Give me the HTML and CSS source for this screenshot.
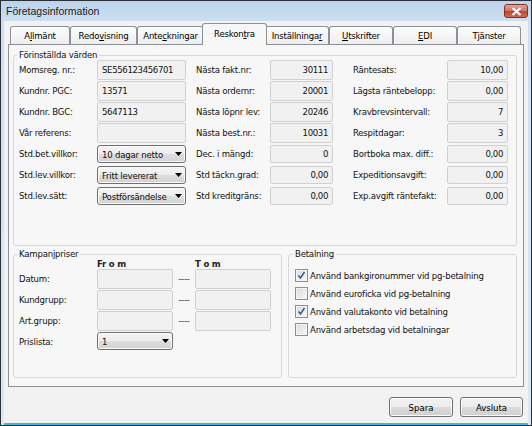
FILE: index.html
```html
<!DOCTYPE html>
<html>

<head>
    <meta charset="utf-8">
    <link rel="stylesheet" href="styles.css">
</head>

<body>
    <div class="window">
        <div class="titlebar">
            <span class="title">Företagsinformation</span>
            <span class="close">
                <svg width="11" height="9" viewBox="0 0 11 9">
                    <path d="M1.5 1 L9.5 8 M9.5 1 L1.5 8" stroke="#fff" stroke-width="2.2" fill="none" />
                </svg>
            </span>
        </div>

        <div class="client">
            <!-- tab strip -->
            <div class="tabs">
                <div class="tab t-allm">A<u>l</u>lmänt</div>
                <div class="tab t-redo">Redo<u>v</u>isning</div>
                <div class="tab t-ante">Ante<u>c</u>kningar</div>
                <div class="tab active">Reskon<u>t</u>ra</div>
                <div class="tab">Inställninga<u>r</u></div>
                <div class="tab"><u>U</u>tskrifter</div>
                <div class="tab"><u>E</u>DI</div>
                <div class="tab">T<u>j</u>änster</div>
            </div>

            <div class="panel">
                <fieldset class="group preset">
                    <legend>Förinställda värden</legend>
                    <div class="cols">
                        <div class="col col1">
                            <span class="lbl">Momsreg. nr.:</span>
                            <div class="field">SE556123456701</div>
                            <span class="lbl">Kundnr. PGC:</span>
                            <div class="field">13571</div>
                            <span class="lbl">Kundnr. BGC:</span>
                            <div class="field">5647113</div>
                            <span class="lbl">Vår referens:</span>
                            <div class="field"></div>
                            <span class="lbl">Std.bet.villkor:</span>
                            <div class="select"><span>10 dagar netto</span><svg width="7" height="4" viewBox="0 0 7 4"><path d="M0 0 H7 L3.5 4 Z" fill="#000" /></svg></div>
                            <span class="lbl">Std.lev.villkor:</span>
                            <div class="select"><span>Fritt levererat</span><svg width="7" height="4" viewBox="0 0 7 4"><path d="M0 0 H7 L3.5 4 Z" fill="#000" /></svg></div>
                            <span class="lbl">Std.lev.sätt:</span>
                            <div class="select"><span>Postförsändelse</span><svg width="7" height="4" viewBox="0 0 7 4"><path d="M0 0 H7 L3.5 4 Z" fill="#000" /></svg></div>
                        </div>

                        <div class="col col2">
                            <span class="lbl">Nästa fakt.nr:</span>
                            <div class="field num">30111</div>
                            <span class="lbl">Nästa ordernr:</span>
                            <div class="field num">20001</div>
                            <span class="lbl">Nästa löpnr lev:</span>
                            <div class="field num">20246</div>
                            <span class="lbl">Nästa best.nr.:</span>
                            <div class="field num">10031</div>
                            <span class="lbl">Dec. i mängd:</span>
                            <div class="field num short">0</div>
                            <span class="lbl">Std täckn.grad:</span>
                            <div class="field num short">0,00</div>
                            <span class="lbl">Std kreditgräns:</span>
                            <div class="field num short">0,00</div>
                        </div>

                        <div class="col col3">
                            <span class="lbl">Räntesats:</span>
                            <div class="field num">10,00</div>
                            <span class="lbl">Lägsta räntebelopp:</span>
                            <div class="field num">0,00</div>
                            <span class="lbl">Kravbrevsintervall:</span>
                            <div class="field num">7</div>
                            <span class="lbl">Respitdagar:</span>
                            <div class="field num">3</div>
                            <span class="lbl">Bortboka max. diff.:</span>
                            <div class="field num short">0,00</div>
                            <span class="lbl">Expeditionsavgift:</span>
                            <div class="field num short">0,00</div>
                            <span class="lbl">Exp.avgift räntefakt:</span>
                            <div class="field num short">0,00</div>
                        </div>
                    </div>
                </fieldset>

                <div class="lower">
                    <fieldset class="group campaign">
                        <legend>Kampanjpriser</legend>
                        <div class="camp-grid">
                            <span></span>
                            <span class="head">Fr o m</span>
                            <span></span>
                            <span class="head">T o m</span>

                            <span class="lbl">Datum:</span>
                            <div class="field"></div>
                            <span class="dash">----</span>
                            <div class="field"></div>

                            <span class="lbl">Kundgrupp:</span>
                            <div class="field"></div>
                            <span class="dash">----</span>
                            <div class="field"></div>

                            <span class="lbl">Art.grupp:</span>
                            <div class="field"></div>
                            <span class="dash">----</span>
                            <div class="field"></div>

                            <span class="lbl">Prislista:</span>
                            <div class="select"><span>1</span><svg width="7" height="4" viewBox="0 0 7 4"><path d="M0 0 H7 L3.5 4 Z" fill="#000" /></svg></div>
                        </div>
                    </fieldset>

                    <fieldset class="group payment">
                        <legend>Betalning</legend>
                        <div class="checks">
                            <div class="check-row">
                                <span class="box"><svg width="11" height="11" viewBox="0 0 11 11"><path d="M2.5 5.5 L4.5 8 L8.5 2" stroke="#3e5b92" stroke-width="1.6" fill="none" /></svg></span>
                                Använd bankgironummer vid pg-betalning
                            </div>
                            <div class="check-row">
                                <span class="box"></span>
                                Använd euroficka vid pg-betalning
                            </div>
                            <div class="check-row">
                                <span class="box"><svg width="11" height="11" viewBox="0 0 11 11"><path d="M2.5 5.5 L4.5 8 L8.5 2" stroke="#3e5b92" stroke-width="1.6" fill="none" /></svg></span>
                                Använd valutakonto vid betalning
                            </div>
                            <div class="check-row">
                                <span class="box"></span>
                                Använd arbetsdag vid betalningar
                            </div>
                        </div>
                    </fieldset>
                </div>
            </div>

            <div class="actions">
                <button class="btn save">Spara</button>
                <button class="btn">Avsluta</button>
            </div>
        </div>
    </div>
</body>

</html>
```

FILE: styles.css
```css
* {
    box-sizing: border-box;
}

body {
    margin: 0;
    font-family: "DejaVu Sans Condensed", "Liberation Sans", Arial, sans-serif;
    font-stretch: condensed;
    font-size: 9.5px;
    letter-spacing: -0.2px;
    color: #000;
    background: #fff;
}

.window {
    width: 532px;
    height: 426px;
    border: 1px solid #2a313b;
    padding: 0 3px;
    background: linear-gradient(#bdd3ea, #cddff1 20px, #dce7f3);
    display: flex;
    flex-direction: column;
}

/* title bar */
.titlebar {
    height: 20px;
    display: flex;
    align-items: flex-start;
    padding-left: 2px;
}

.title {
    font-family: "Liberation Sans", Arial, sans-serif;
    font-stretch: normal;
    font-size: 10.5px;
    letter-spacing: 0;
    line-height: 20px;
    color: #1c1c1c;
}

.close {
    margin-left: auto;
    margin-top: 3px;
    width: 24px;
    height: 14px;
    border: 1px solid #7a3328;
    border-radius: 3px;
    background: linear-gradient(#e3a597, #d0705d 50%, #c2432c 50%, #cf6a4f);
    display: flex;
    align-items: center;
    justify-content: center;
}

.client {
    flex: 1;
    background: #f2f2f2;
    border-bottom: 2px solid #3fb6da;
    padding-top: 2px;
    display: flex;
    flex-direction: column;
}

/* tabs */
.tabs {
    height: 21px;
    display: flex;
    align-items: flex-end;
    padding-left: 6px;
}

.tab {
    width: 64px;
    height: 18px;
    border: 1px solid #8d9097;
    border-bottom: 0;
    border-radius: 3px 3px 0 0;
    background: linear-gradient(#fdfdfd, #eeeeee);
    display: flex;
    align-items: center;
    justify-content: center;
    white-space: nowrap;
}

.t-allm {
    width: 60px;
}

.t-redo,
.t-ante {
    width: 67px;
}

.tab.active {
    width: 65px;
    height: 22px;
    margin: 0 -2px -1px;
    padding-bottom: 3px;
    background: #f7f7f7;
    position: relative;
    z-index: 1;
}

.panel {
    height: 343px;
    margin: 0 4px;
    border: 1px solid #8d9097;
    background: #f7f7f7;
    padding: 5px 6px 0 4px;
}

/* group boxes */
.group {
    margin: 0;
    min-width: 0;
    border: 1px solid #d6d9dc;
    border-radius: 3px;
    padding: 0 7px 0 5px;
}

.group legend {
    padding: 0 2px;
    margin-left: -2px;
    line-height: 10px;
    color: #111;
}

.preset {
    height: 196px;
}

.cols {
    display: flex;
}

.col {
    display: grid;
    grid-auto-rows: 21px;
}

.col1 {
    grid-template-columns: 78px 89px;
}

.col2 {
    grid-template-columns: 74px 63px;
    margin-left: 10px;
}

.col3 {
    grid-template-columns: 94px 61px;
    margin-left: 20px;
}

.lbl {
    line-height: 20px;
    white-space: nowrap;
    color: #111;
}

.field {
    height: 20px;
    border: 1px solid #d0d0d0;
    border-radius: 2px;
    background: #f1f1f1;
    padding: 0 4px;
    line-height: 17px;
    letter-spacing: -0.35px;
    white-space: nowrap;
    color: #111;
}

.num {
    text-align: right;
}

.field.short {
    height: 18px;
    margin-top: 1px;
    line-height: 15px;
}

.select {
    height: 18px;
    margin-top: 1px;
    border: 1px solid #707070;
    border-radius: 3px;
    background: linear-gradient(#f6f6f6, #ececec 50%, #dedede 50%, #d2d2d2);
    box-shadow: inset 0 0 0 1px #fafafa;
    display: flex;
    align-items: center;
    padding: 0 3px 0 4px;
    color: #111;
}

.select svg {
    margin-left: auto;
}

.lower {
    display: flex;
    gap: 6px;
    margin-top: 3px;
}

.campaign {
    width: 269px;
    height: 129px;
}

.payment {
    width: 229px;
    height: 129px;
    padding-left: 6px;
}

.camp-grid {
    display: grid;
    grid-template-columns: 78px 76px 22px 76px;
    grid-template-rows: 10px 21px 21px 21px 21px;
}

.head {
    font-weight: bold;
    line-height: 10px;
    color: #222;
}

.dash {
    line-height: 20px;
    text-align: center;
    color: #333;
}

.camp-grid .select {
    margin-top: 0;
}

.checks {
    padding-top: 7px;
}

.check-row {
    height: 18px;
    display: flex;
    align-items: center;
    gap: 2px;
    color: #111;
}

.box {
    width: 13px;
    height: 13px;
    border: 1px solid #8e8f8f;
    background: linear-gradient(135deg, #d6d9de, #fafafa);
    box-shadow: inset 0 0 0 1px #f4f4f4;
    display: flex;
    align-items: center;
    justify-content: center;
}

/* buttons */
.actions {
    display: flex;
    justify-content: flex-end;
    gap: 7px;
    padding: 10px 5px 0 0;
}

.btn {
    width: 63px;
    height: 20px;
    padding: 0;
    border: 1px solid #707070;
    border-radius: 3px;
    background: linear-gradient(#f2f2f2, #ebebeb 50%, #dddddd 50%, #cfcfcf);
    box-shadow: inset 0 0 0 1px #fbfbfb;
    font: inherit;
    color: #000;
}

.btn.save {
    width: 64px;
}
```
